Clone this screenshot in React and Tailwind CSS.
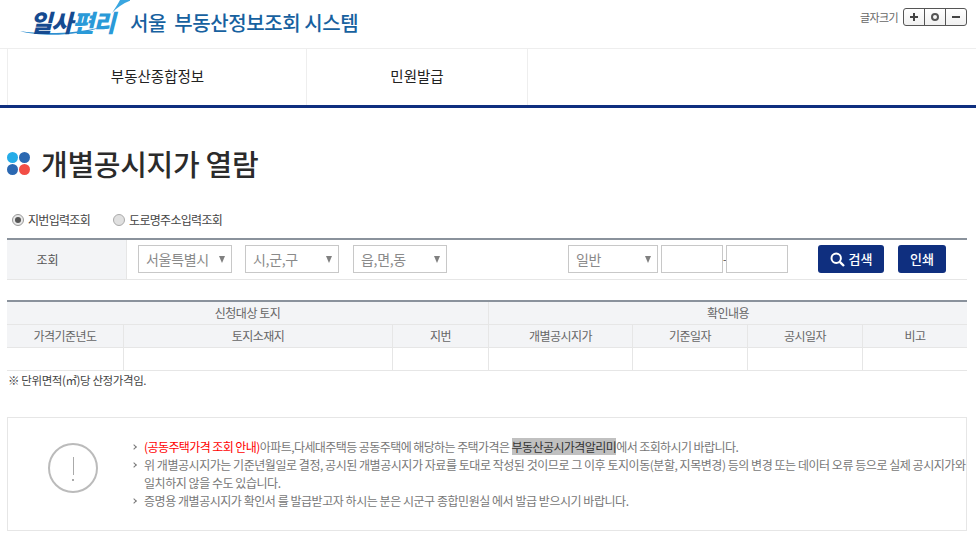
import React from 'react';

const Select = ({ label, width = 'w-[94px]' }) => (
  <div className={`${width} h-[28px] border border-[#c8c8c8] bg-white flex items-center justify-between pl-[7px] pr-[6px] text-[14px] text-[#8a8a8a] tracking-[-0.3px]`}>
    <span>{label}</span>
    <span className="w-0 h-0 border-x-[3.5px] border-x-transparent border-t-[7px] border-t-[#808080]"></span>
  </div>
);

const Th = ({ children, colSpan }) => (
  <th colSpan={colSpan} className="h-[23px] p-0 bg-[#f3f4f6] border-b border-r border-[#e6e6e6] last:border-r-0 text-[12px] font-normal text-[#666] text-center tracking-[-0.5px]">
    {children}
  </th>
);

const Notice = ({ children, className = '' }) => (
  <li className={`relative pl-[11px] h-[18px] leading-[18px] whitespace-nowrap ${className}`}>
    <span className="absolute left-[-1px] top-[7px] w-[4px] h-[4px] border-t border-r border-[#777] rotate-45"></span>
    {children}
  </li>
);

export default function App() {
  return (
    <div className="w-[976px] h-[542px] overflow-hidden bg-white font-['Noto_Sans_CJK_KR','Liberation_Sans',sans-serif]">
      <header className="h-[49px] border-b border-[#eeeeee] relative flex">
        <div className="relative ml-[20px] w-[110px] h-[48px] shrink-0 overflow-hidden">
          <svg className="absolute left-0 top-0" width="110" height="40" viewBox="0 0 110 40" fill="none">
            <path d="M0 31 C20 37 58 36 82 27 C60 33 24 35 0 31 Z" fill="#2f8fd0" />
            <path d="M92 13 C97 7 104 3 112 0 L100 0 C98 4 95 8 92 13 Z" fill="#3aa6e0" />
          </svg>
          <span className="absolute left-[10px] top-[6px] text-[24px] leading-[32px] font-black italic text-[#154a90] tracking-[-1px] whitespace-nowrap">일사<span className="text-[#2a9ad8]">편리</span></span>
        </div>
        <div className="pt-[8px] text-[20px] leading-[30px] font-medium text-[#17619f] tracking-[-0.4px] whitespace-nowrap">서울&nbsp; 부동산정보조회 시스템</div>
        <div className="absolute left-[860px] top-[8px] flex items-center">
          <span className="text-[11px] leading-[14px] text-[#666] tracking-[-0.6px] mr-[5px]">글자크기</span>
          <div className="flex w-[64px] h-[18px] border border-[#555] rounded-[3px] bg-gradient-to-b from-white to-[#f0f0f0]">
            <span className="flex-1 flex items-center justify-center border-r border-[#555]">
              <svg width="10" height="10" viewBox="0 0 10 10"><path d="M5 1v8M1 5h8" stroke="#444" strokeWidth="2" /></svg>
            </span>
            <span className="flex-1 flex items-center justify-center border-r border-[#555]">
              <span className="w-[8px] h-[8px] rounded-full border-2 border-[#555]"></span>
            </span>
            <span className="flex-1 flex items-center justify-center">
              <svg width="10" height="10" viewBox="0 0 10 10"><path d="M1 5h8" stroke="#444" strokeWidth="2" /></svg>
            </span>
          </div>
        </div>
      </header>

      <nav className="h-[59px] border-b-[3px] border-[#0f2f7f] pl-[7px] flex">
        <a className="w-[300px] border-x border-[#eeeeee] flex items-center justify-center pl-[1px] pb-[2px] text-[14.5px] text-[#222]">부동산종합정보</a>
        <a className="w-[221px] border-r border-[#eeeeee] flex items-center justify-center pb-[2px] text-[14.5px] text-[#222]">민원발급</a>
      </nav>

      <main className="px-[7px]">
        <div className="mt-[38px] h-[35px] flex items-center">
          <div className="grid grid-cols-2 gap-[1px] w-[23px] h-[23px]">
            <span className="rounded-full bg-[#25ace8] w-[11px] h-[11px]"></span>
            <span className="rounded-full bg-[#2b68b1] w-[11px] h-[11px]"></span>
            <span className="rounded-full bg-[#2b68b1] w-[11px] h-[11px]"></span>
            <span className="rounded-full bg-[#f24e46] w-[11px] h-[11px]"></span>
          </div>
          <h1 className="ml-[11px] text-[29px] leading-[35px] font-medium text-[#2b2b2b] tracking-[-0.3px]">개별공시지가 열람</h1>
        </div>

        <div className="mt-[30px] h-[18px] pl-[5px] flex items-center text-[12px] text-[#444] tracking-[-0.7px]">
          <span className="w-[12px] h-[12px] rounded-full border border-[#999] bg-[#e8e8e8] flex items-center justify-center">
            <span className="w-[6px] h-[6px] rounded-full bg-[#555]"></span>
          </span>
          <span className="ml-[4px]">지번입력조회</span>
          <span className="ml-[23px] w-[12px] h-[12px] rounded-full border border-[#aaa] bg-[#e0e0e0]"></span>
          <span className="ml-[4px]">도로명주소입력조회</span>
        </div>

        <section className="mt-[9px] w-[960px] h-[42px] border-t-2 border-b border-t-[#8a929c] border-b-[#e6e6e6] flex">
          <div className="w-[120px] bg-[#f3f4f6] border-r border-[#e6e6e6] flex items-center justify-center pr-[38px] text-[12px] text-[#555]">조회</div>
          <div className="pt-[5px] flex items-start">
            <div className="ml-[11px]"><Select label="서울특별시" /></div>
            <div className="ml-[13px]"><Select label="시,군,구" /></div>
            <div className="ml-[14px]"><Select label="읍,면,동" /></div>
            <div className="ml-[121px]"><Select label="일반" width="w-[90px]" /></div>
            <div className="ml-[3px] w-[62px] h-[28px] border border-[#c8c8c8]"></div>
            <span className="w-[3px] h-[28px] leading-[28px] text-[10px] text-[#333] text-center">-</span>
            <div className="w-[62px] h-[28px] border border-[#c8c8c8]"></div>
            <button className="ml-[30px] w-[66px] h-[28px] rounded-[3px] bg-[#0f2f7f] flex items-center justify-center gap-[4px] text-[13px] font-medium text-white">
              <svg width="15" height="15" viewBox="0 0 15 15" fill="none"><circle cx="6.2" cy="6.2" r="4.7" stroke="#fff" strokeWidth="2" /><path d="M9.8 9.8L14 14" stroke="#fff" strokeWidth="2.4" /></svg>
              검색
            </button>
            <button className="ml-[14px] w-[48px] h-[28px] rounded-[3px] bg-[#0f2f7f] text-[13px] font-medium text-white">인쇄</button>
          </div>
        </section>

        <table className="mt-[20px] w-[960px] table-fixed border-separate border-spacing-0 border-t-2 border-[#8a929c]">
          <colgroup>
            <col className="w-[117px]" />
            <col className="w-[269px]" />
            <col className="w-[96px]" />
            <col className="w-[144px]" />
            <col className="w-[115px]" />
            <col className="w-[115px]" />
            <col className="w-[104px]" />
          </colgroup>
          <thead>
            <tr>
              <Th colSpan={3}>신청대상 토지</Th>
              <Th colSpan={4}>확인내용</Th>
            </tr>
            <tr>
              <Th>가격기준년도</Th>
              <Th>토지소재지</Th>
              <Th>지번</Th>
              <Th>개별공시지가</Th>
              <Th>기준일자</Th>
              <Th>공시일자</Th>
              <Th>비고</Th>
            </tr>
          </thead>
          <tbody>
            <tr>
              {[0, 1, 2, 3, 4, 5, 6].map(i => (
                <td key={i} className="h-[23px] p-0 border-b border-r border-[#e6e6e6] last:border-r-0"></td>
              ))}
            </tr>
          </tbody>
        </table>
        <p className="mt-[1px] h-[16px] pl-[1px] text-[11.5px] leading-[16px] text-[#444] tracking-[-0.4px]">※ 단위면적(㎡)당 산정가격임.</p>

        <section className="mt-[29px] w-[960px] h-[114px] border border-[#e6e6e6] flex">
          <div className="ml-[40px] mt-[25px] w-[50px] h-[50px] shrink-0 rounded-full border-[2px] border-[#bbbbbb] flex flex-col items-center pt-[12px]">
            <span className="w-[1px] h-[18px] bg-[#aaaaaa]"></span>
            <span className="mt-[4px] w-[2px] h-[2px] bg-[#aaaaaa]"></span>
          </div>
          <ul className="ml-[35px] mt-[20px] text-[12px] text-[#777] tracking-[-0.46px]">
            <Notice className="tracking-[-0.58px]"><span className="text-[#f00]">(공동주택가격 조회 안내)</span>아파트,다세대주택등 공동주택에 해당하는 주택가격은 <span className="bg-[#c0c0c0] text-[#333]">부동산공시가격알리미</span>에서 조회하시기 바랍니다.</Notice>
            <Notice>위 개별공시지가는 기준년월일로 결정, 공시된 개별공시지가 자료를 토대로 작성된 것이므로 그 이후 토지이동(분할, 지목변경) 등의 변경 또는 데이터 오류 등으로 실제 공시지가와</Notice>
            <li className="pl-[11px] h-[18px] leading-[18px] whitespace-nowrap">일치하지 않을 수도 있습니다.</li>
            <Notice>증명용 개별공시지가 확인서 를 발급받고자 하시는 분은 시군구 종합민원실 에서 발급 받으시기 바랍니다.</Notice>
          </ul>
        </section>
      </main>
    </div>
  );
}
